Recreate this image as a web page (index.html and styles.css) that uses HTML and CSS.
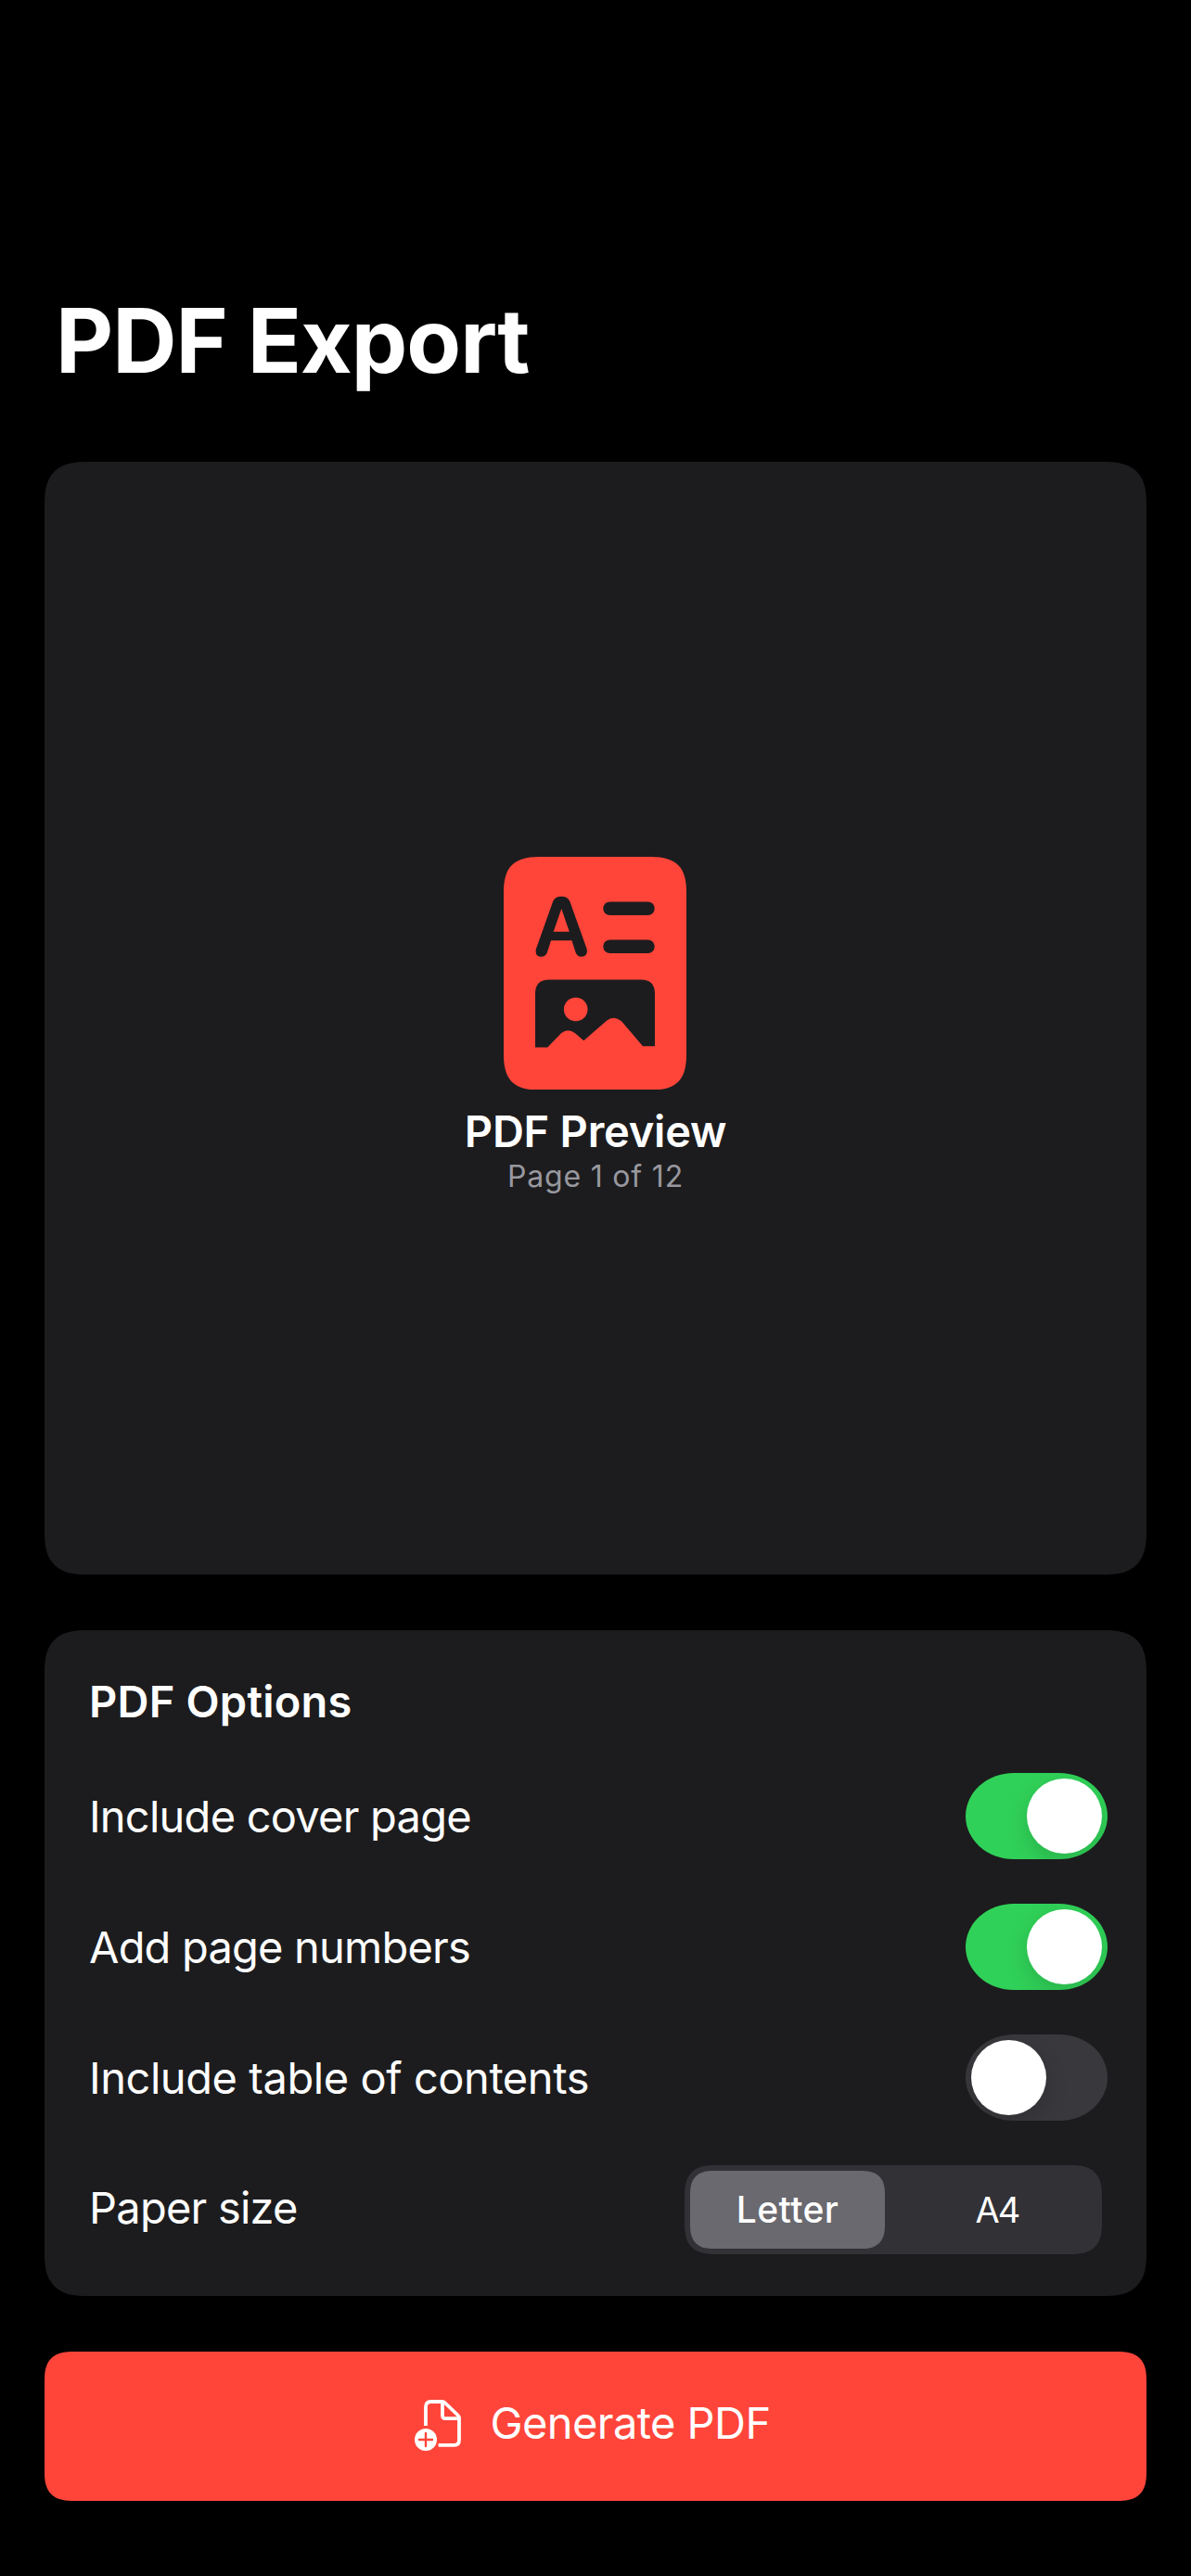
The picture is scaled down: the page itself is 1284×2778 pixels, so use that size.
FILE: index.html
```html
<!DOCTYPE html>
<html lang="en">
<head>
<meta charset="utf-8">
<title>PDF Export</title>
<link rel="stylesheet" href="styles.css">
</head>
<body>
<main class="screen">
  <h1 class="title">PDF Export</h1>

  <section class="card preview">
    <svg class="preview-icon" viewBox="0 0 197 251.5" aria-hidden="true">
      <path class="accent" d="M0 38C0 11 11 0 38 0H159C186 0 197 11 197 38V213.5C197 240.500 186 251.500 159 251.500H38C11 251.500 0 240.500 0 213.500Z"/>
      <path class="cutout" fill-rule="evenodd" d="M53.2 48Q55.500 42.700 62.200 42.700Q69 42.700 71.300 48L89.700 99.500Q91 107.700 84 107.700Q79.500 107.700 77.700 103.500L73.500 90.300H51L46.800 103.500Q44.800 107.700 40.700 107.700Q33.500 107.700 34.800 99.700ZM62.300 56L53.700 80.700H70.800Z"/>
      <rect class="cutout" x="107.300" y="48.500" width="55.400" height="14.500" rx="7.250"/>
      <rect class="cutout" x="107.300" y="89.500" width="55.400" height="14.500" rx="7.250"/>
      <path class="cutout" d="M34 205.500V147.500Q34 132.500 49 132.500H148Q163 132.500 163 147.500V204.300H150L127 177.200Q118.700 170.200 110.700 177L86.300 198.300L77 190.300Q69.300 184 62 190.300L47.300 205.500Z"/>
      <circle class="accent" cx="77.700" cy="164.500" r="12.800"/>
    </svg>
    <h2 class="preview-title">PDF Preview</h2>
    <p class="preview-page">Page 1 of 12</p>
  </section>

  <section class="card options">
    <h2 class="options-title">PDF Options</h2>
    <div class="row">
      <span class="label">Include cover page</span>
      <span class="toggle on"><span class="knob"></span></span>
    </div>
    <div class="row">
      <span class="label label-numbers">Add page numbers</span>
      <span class="toggle on"><span class="knob"></span></span>
    </div>
    <div class="row">
      <span class="label label-contents">Include table of contents</span>
      <span class="toggle"><span class="knob"></span></span>
    </div>
    <div class="row row-paper">
      <span class="label">Paper size</span>
      <div class="segmented">
        <span class="segment selected">Letter</span>
        <span class="segment segment-a4">A4</span>
      </div>
    </div>
  </section>

  <button class="generate" type="button">
    <svg class="generate-icon" viewBox="0 0 50 55" aria-hidden="true">
      <path class="line" d="M12 28V7.500Q12 2 17.500 2H29.500Q31.500 2 33 3.500L46.500 16.500Q48 18 48 20V43.500Q48 48.800 42.700 48.800H25.600"/>
      <path class="line" d="M30 2.500V17Q30 20.200 33.200 20.200H47.500"/>
      <circle cx="12" cy="43" r="12"/>
      <path class="plus" d="M5 43H19M12 36V50"/>
    </svg>
    <span class="generate-text">Generate PDF</span>
  </button>
</main>
</body>
</html>
```
FILE: styles.css
```css
* {
  box-sizing: border-box;
}

body {
  margin: 0;
  background: #000;
  color: #fff;
  font-family: Inter, "Liberation Sans", sans-serif;
  font-size: 47px;
}

h1, h2, p {
  margin: 0;
}

.screen {
  display: flex;
  flex-direction: column;
  width: 1284px;
  height: 2778px;
  padding: 307px 48px 0;
}

.title {
  height: 120px;
  margin: 0 12px 71px;
  font-size: 96px;
  font-weight: 700;
  line-height: 120px;
  letter-spacing: -0.97px;
}

.card {
  background: #1c1c1e;
  border-radius: 47px;
  corner-shape: superellipse(1.44);
}

.preview {
  display: flex;
  flex-direction: column;
  align-items: center;
  height: 1200px;
  padding-top: 425.5px;
}

.preview-icon {
  width: 197px;
  height: 251.5px;
  margin: 0 2px 16px 0;
}

.accent {
  fill: #ff453a;
}

.cutout {
  fill: #1c1c1e;
}

.preview-title {
  font-size: 47px;
  font-weight: 600;
  line-height: 58px;
  letter-spacing: -0.24px;
}

.preview-page {
  color: #98989f;
  font-size: 32px;
  line-height: 39px;
  letter-spacing: 0.81px;
}

.options {
  display: flex;
  flex-direction: column;
  gap: 48px;
  height: 718px;
  margin-top: 60px;
  padding: 48px;
}

.options-title {
  font-size: 47px;
  font-weight: 600;
  line-height: 58px;
  letter-spacing: 0.2px;
}

.row {
  display: flex;
  align-items: center;
  justify-content: space-between;
  height: 93px;
}

.label {
  padding-bottom: 1px;
  letter-spacing: -0.76px;
}

.label-numbers {
  letter-spacing: -0.8px;
}

.label-contents {
  letter-spacing: -0.44px;
}

.toggle {
  display: flex;
  width: 153px;
  height: 93px;
  margin-right: -6px;
  padding: 6px;
  overflow: hidden;
  background: #39393d;
  border-radius: 52px / 46.5px;
}

.toggle.on {
  justify-content: flex-end;
  background: #30d158;
}

.knob {
  width: 81px;
  height: 81px;
  background: #fff;
  border-radius: 50%;
  box-shadow: 0 9px 24px rgba(0, 0, 0, 0.15);
}

.row-paper {
  height: 96px;
}

.row-paper .label {
  padding-bottom: 5px;
}

.segmented {
  display: grid;
  grid-template-columns: 210px 1fr;
  column-gap: 12px;
  width: 450px;
  height: 96px;
  padding: 6px;
  background: #313136;
  border-radius: 34px;
  corner-shape: superellipse(1.44);
}

.segment {
  font-size: 39px;
  font-weight: 500;
  line-height: 84px;
  text-align: center;
}

.segment-a4 {
  padding-left: 2px;
  font-size: 38px;
  font-weight: 400;
  letter-spacing: -2px;
}

.selected {
  background: #69696f;
  border-radius: 27px;
  corner-shape: superellipse(1.44);
  letter-spacing: 0.41px;
}

.generate {
  display: flex;
  align-items: center;
  justify-content: center;
  gap: 31px;
  height: 161px;
  margin-top: 60px;
  padding: 0 6px 0 0;
  border: 0;
  border-radius: 32px;
  corner-shape: superellipse(1.44);
  background: #ff453a;
  color: #fff;
  font: inherit;
}

.generate-icon {
  width: 50px;
  height: 55px;
  margin-bottom: 2px;
  fill: #fff;
}

.generate-icon .line {
  fill: none;
  stroke: #fff;
  stroke-width: 3.8;
}

.generate-icon .plus {
  fill: none;
  stroke: #ff453a;
  stroke-width: 2.4;
  stroke-linecap: round;
}

.generate-text {
  padding-bottom: 8px;
  letter-spacing: -0.56px;
}
```
